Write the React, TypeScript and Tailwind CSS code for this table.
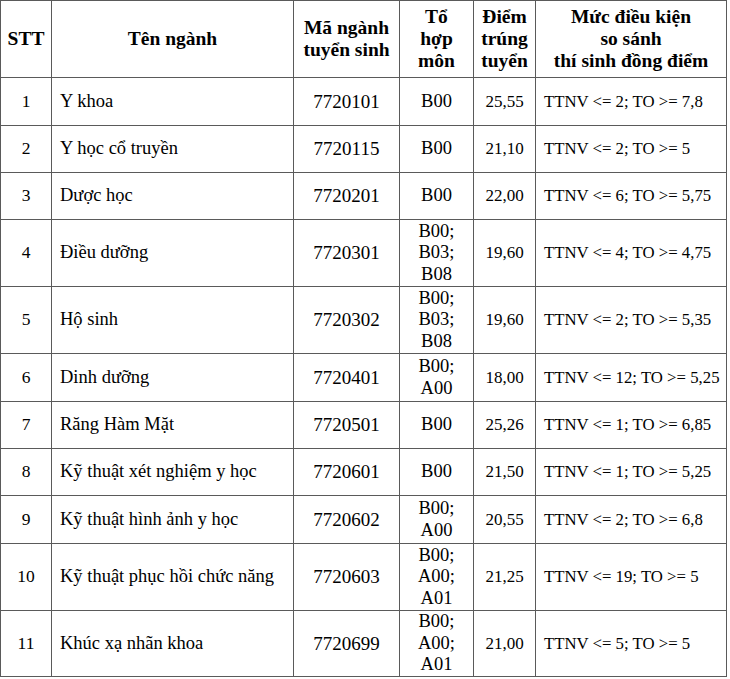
import React from "react";

type Row = {
  stt: string;
  name: string;
  code: string;
  combo: string[];
  score: string;
  cond: string;
  h: string;
};

const rows: Row[] = [
  { stt: "1", name: "Y khoa", code: "7720101", combo: ["B00"], score: "25,55", cond: "TTNV <= 2; TO >= 7,8", h: "h-[48px]" },
  { stt: "2", name: "Y học cổ truyền", code: "7720115", combo: ["B00"], score: "21,10", cond: "TTNV <= 2; TO >= 5", h: "h-[47px]" },
  { stt: "3", name: "Dược học", code: "7720201", combo: ["B00"], score: "22,00", cond: "TTNV <= 6; TO >= 5,75", h: "h-[47px]" },
  { stt: "4", name: "Điều dưỡng", code: "7720301", combo: ["B00;", "B03;", "B08"], score: "19,60", cond: "TTNV <= 4; TO >= 4,75", h: "h-[67px]" },
  { stt: "5", name: "Hộ sinh", code: "7720302", combo: ["B00;", "B03;", "B08"], score: "19,60", cond: "TTNV <= 2; TO >= 5,35", h: "h-[67px]" },
  { stt: "6", name: "Dinh dưỡng", code: "7720401", combo: ["B00;", "A00"], score: "18,00", cond: "TTNV <= 12; TO >= 5,25", h: "h-[48px]" },
  { stt: "7", name: "Răng Hàm Mặt", code: "7720501", combo: ["B00"], score: "25,26", cond: "TTNV <= 1; TO >= 6,85", h: "h-[47px]" },
  { stt: "8", name: "Kỹ thuật xét nghiệm y học", code: "7720601", combo: ["B00"], score: "21,50", cond: "TTNV <= 1; TO >= 5,25", h: "h-[47px]" },
  { stt: "9", name: "Kỹ thuật hình ảnh y học", code: "7720602", combo: ["B00;", "A00"], score: "20,55", cond: "TTNV <= 2; TO >= 6,8", h: "h-[48px]" },
  { stt: "10", name: "Kỹ thuật phục hồi chức năng", code: "7720603", combo: ["B00;", "A00;", "A01"], score: "21,25", cond: "TTNV <= 19; TO >= 5", h: "h-[67px]" },
  { stt: "11", name: "Khúc xạ nhãn khoa", code: "7720699", combo: ["B00;", "A00;", "A01"], score: "21,00", cond: "TTNV <= 5; TO >= 5", h: "h-[66px]" },
];

const cell =
  "border border-[#5a5a5a] p-0 align-middle font-['Liberation_Serif','Times_New_Roman',serif] text-black";
const head = `${cell} font-bold text-center text-[19.5px] leading-[22px]`;

export default function App() {
  return (
    <div className="w-[730px] h-[679px] bg-white overflow-hidden font-['Liberation_Serif','Times_New_Roman',serif]">
      <table className="table-fixed border-collapse w-[726px]">
        <colgroup>
          <col className="w-[51px]" />
          <col className="w-[242px]" />
          <col className="w-[106px]" />
          <col className="w-[74px]" />
          <col className="w-[62px]" />
          <col className="w-[191px]" />
        </colgroup>
        <thead>
          <tr className="h-[77px]">
            <th className={head}>STT</th>
            <th className={head}>Tên ngành</th>
            <th className={head}>
              Mã ngành
              <br />
              tuyển sinh
            </th>
            <th className={head}>
              Tổ
              <br />
              hợp
              <br />
              môn
            </th>
            <th className={head}>
              Điểm
              <br />
              trúng
              <br />
              tuyển
            </th>
            <th className={`${head} whitespace-nowrap`}>
              Mức điều kiện
              <br />
              so sánh
              <br />
              thí sinh đồng điểm
            </th>
          </tr>
        </thead>
        <tbody>
          {rows.map((r) => (
            <tr key={r.stt} className={r.h}>
              <td className={`${cell} text-center text-[17.5px] leading-[21.5px]`}>{r.stt}</td>
              <td className={`${cell} pl-[8px] text-[18.5px] leading-[21.5px] whitespace-nowrap`}>{r.name}</td>
              <td className={`${cell} text-center text-[19px] leading-[21.5px]`}>{r.code}</td>
              <td className={`${cell} text-center text-[18.5px] leading-[21.5px]`}>
                {r.combo.map((c, i) => (
                  <div key={i}>{c}</div>
                ))}
              </td>
              <td className={`${cell} text-center text-[17px] leading-[21.5px]`}>{r.score}</td>
              <td className={`${cell} pl-[8px] whitespace-nowrap text-[16.75px] leading-[21.5px]`}>{r.cond}</td>
            </tr>
          ))}
        </tbody>
      </table>
    </div>
  );
}
